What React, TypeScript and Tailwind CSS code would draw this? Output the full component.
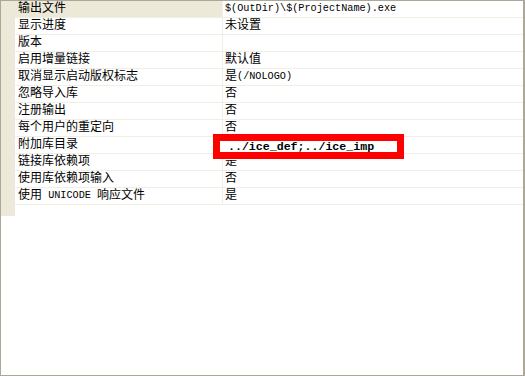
import React from "react";

const rows: [string, string][] = [
  ["输出文件", "$(OutDir)\\$(ProjectName).exe"],
  ["显示进度", "未设置"],
  ["版本", ""],
  ["启用增量链接", "默认值"],
  ["取消显示启动版权标志", "是(/NOLOGO)"],
  ["忽略导入库", "否"],
  ["注册输出", "否"],
  ["每个用户的重定向", "否"],
  ["附加库目录", ""],
  ["链接库依赖项", "是"],
  ["使用库依赖项输入", "否"],
  ["使用 UNICODE 响应文件", "是"],
];

const cjk = { fontFamily: '"Liberation Mono", "Noto Sans CJK SC", monospace' };

function Txt({ s }: { s: string }) {
  const parts = s.split(/([\x20-\x7e]+)/).filter((p) => p.length > 0);
  return (
    <>
      {parts.map((p, i) =>
        /^[\x20-\x7e]+$/.test(p) ? (
          <span key={i} className="text-[10.2px]" style={{ whiteSpace: "pre" }}>
            {p}
          </span>
        ) : (
          <span key={i} className="text-[12px]">
            {p}
          </span>
        )
      )}
    </>
  );
}

export default function App() {
  return (
    <div
      className="relative w-[525px] h-[376px] border border-r-2 border-[#aca899] bg-white text-black overflow-hidden"
      style={cjk}
    >
      <div className="flex">
        <div className="w-[14px] h-[215px] bg-[#ece9d8]" />
        <div className="flex-1 flex flex-col">
          {rows.map(([name, value], i) => (
            <div key={i} className="flex h-[17px] border-b border-[#f1efe2]">
              <div
                className={`w-[208px] pl-[3px] border-r border-[#f1efe2] flex items-center leading-none ${
                  i === 0 ? "bg-[#ece9d8]" : ""
                }`}
              >
                <Txt s={name} />
              </div>
              <div className="flex-1 pl-[2px] flex items-center leading-none">
                <Txt s={value} />
              </div>
            </div>
          ))}
        </div>
      </div>
      <div className="absolute left-[212px] top-[133px] w-[191px] h-[25px] border-[7px] border-[#ff0000] bg-white flex items-center pl-[8px]">
        <span
          className="text-[11.6px] font-bold leading-none"
          style={{ fontFamily: '"Liberation Mono", monospace' }}
        >
          ../ice_def;../ice_imp
        </span>
      </div>
    </div>
  );
}
